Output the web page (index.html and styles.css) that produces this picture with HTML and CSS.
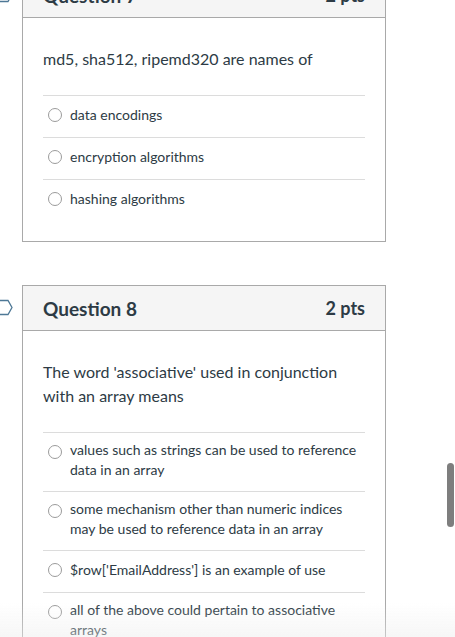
FILE: index.html
```html
<!DOCTYPE html>
<html>
<head>
<meta charset="utf-8">
<link rel="stylesheet" href="styles.css">
</head>
<body>
<div class="page">
  <div class="question first">
    <svg class="flag" width="16" height="17" viewBox="0 0 16 17"><path d="M-2 1.5 H11 L15 8.5 L11 15.5 H-2" fill="none" stroke="#4e7896" stroke-width="1.3"/></svg>
    <div class="card">
      <div class="card-head"><span class="title">Question 7</span><span class="pts">2 pts</span></div>
      <div class="card-body">
        <div class="q-text">md5, sha512, ripemd320 are names of</div>
        <div class="answers">
          <div class="answer"><span class="radio"></span><span class="label">data encodings</span></div>
          <div class="answer"><span class="radio"></span><span class="label">encryption algorithms</span></div>
          <div class="answer"><span class="radio"></span><span class="label">hashing algorithms</span></div>
        </div>
      </div>
    </div>
  </div>
  <div class="question">
    <svg class="flag" width="16" height="17" viewBox="0 0 16 17"><path d="M-2 1.5 H11 L15 8.5 L11 15.5 H-2" fill="none" stroke="#4e7896" stroke-width="1.3"/></svg>
    <div class="card">
      <div class="card-head"><span class="title">Question 8</span><span class="pts">2 pts</span></div>
      <div class="card-body">
        <div class="q-text">The word 'associative' used in conjunction with an array means</div>
        <div class="answers">
          <div class="answer"><span class="radio"></span><span class="label">values such as strings can be used to reference data in an array</span></div>
          <div class="answer"><span class="radio"></span><span class="label">some mechanism other than numeric indices may be used to reference data in an array</span></div>
          <div class="answer"><span class="radio"></span><span class="label">$row['EmailAddress'] is an example of use</span></div>
          <div class="answer"><span class="radio"></span><span class="label">all of the above could pertain to associative arrays</span></div>
        </div>
      </div>
    </div>
  </div>
</div>
<div class="scrollbar"></div>
<div class="fade"></div>
</body>
</html>
```
FILE: styles.css
```css
html, body {
  margin: 0;
  padding: 0;
  background: #ffffff;
  overflow: hidden;
}
body {
  font-family: Lato, "Open Sans", sans-serif;
  color: #2d3b45;
}
.page {
  display: flex;
  flex-direction: column;
  gap: 43px;
  margin-top: -28px;
}
.question {
  display: flex;
  align-items: flex-start;
}
.flag {
  flex: none;
  margin-top: 14px;
  margin-left: -3px;
}
.card {
  margin-left: 9px;
  width: 364px;
  box-sizing: border-box;
  border: 1px solid #a9a9a9;
  flex: none;
}
.card-head {
  height: 44px;
  padding: 0 20px;
  display: flex;
  align-items: center;
  justify-content: space-between;
  background: #f5f5f5;
  border-bottom: 1px solid #a9a9a9;
  font-weight: 700;
}
.title {
  font-size: 19px;
}
.pts {
  font-size: 18px;
}
.card-body {
  padding: 29px 20px 20px;
}
.q-text {
  font-size: 16px;
  line-height: 24px;
}
.answers {
  margin-top: 24px;
}
.answer {
  display: flex;
  align-items: center;
  border-top: 1px solid #dcdcdc;
  padding: 7px 0 11px;
  min-height: 42px;
  box-sizing: border-box;
  font-size: 14px;
  line-height: 20px;
}
.radio {
  flex: none;
  align-self: flex-start;
  width: 12px;
  height: 12px;
  border: 1px solid #9b9b9b;
  border-radius: 50%;
  margin: 5px 8px 0 5px;
  background: #fff;
}
.scrollbar {
  position: fixed;
  left: 447px;
  top: 463px;
  width: 7px;
  height: 64px;
  border-radius: 4px;
  background: #7e7e7e;
}
.fade {
  position: fixed;
  left: 0;
  right: 0;
  bottom: 0;
  height: 34px;
  background: linear-gradient(to bottom, rgba(240,240,240,0), rgba(236,236,236,0.45));
  pointer-events: none;
}
```
